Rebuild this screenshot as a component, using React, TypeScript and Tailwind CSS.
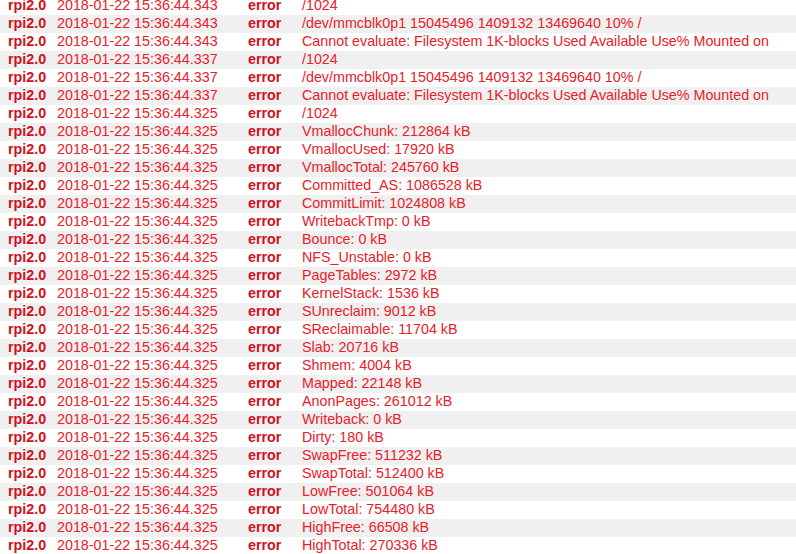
const rows: [string, string, string][] = [
["343","/1024"],["343","/dev/mmcblk0p1 15045496 1409132 13469640 10% /"],["343","Cannot evaluate: Filesystem 1K-blocks Used Available Use% Mounted on"],
["337","/1024"],["337","/dev/mmcblk0p1 15045496 1409132 13469640 10% /"],["337","Cannot evaluate: Filesystem 1K-blocks Used Available Use% Mounted on"],
["325","/1024"],["325","VmallocChunk: 212864 kB"],["325","VmallocUsed: 17920 kB"],["325","VmallocTotal: 245760 kB"],["325","Committed_AS: 1086528 kB"],["325","CommitLimit: 1024808 kB"],["325","WritebackTmp: 0 kB"],["325","Bounce: 0 kB"],["325","NFS_Unstable: 0 kB"],["325","PageTables: 2972 kB"],["325","KernelStack: 1536 kB"],["325","SUnreclaim: 9012 kB"],["325","SReclaimable: 11704 kB"],["325","Slab: 20716 kB"],["325","Shmem: 4004 kB"],["325","Mapped: 22148 kB"],["325","AnonPages: 261012 kB"],["325","Writeback: 0 kB"],["325","Dirty: 180 kB"],["325","SwapFree: 511232 kB"],["325","SwapTotal: 512400 kB"],["325","LowFree: 501064 kB"],["325","LowTotal: 754480 kB"],["325","HighFree: 66508 kB"],["325","HighTotal: 270336 kB"],
].map(([ms, m]) => ["rpi2.0", "2018-01-22 15:36:44." + ms, m] as [string,string,string]);

export default function App() {
  return (
    <div className="w-[796px] h-[554px] overflow-hidden bg-white" style={{ fontFamily: '"Liberation Sans", Arial, sans-serif' }}>
      <div className="flex flex-col mt-[-3px]">
        {rows.map(([h, d, m], i) => (
          <div key={i} className={`flex h-[18px] items-center text-[14.3px] whitespace-nowrap text-[#e8202a] ${i % 2 ? "bg-[#f0f0f0]" : "bg-white"}`}>
            <span className="w-[57px] pl-[8px] font-bold text-[#d0101a]">{h}</span>
            <span className="w-[191px]">{d}</span>
            <span className="w-[54px] font-bold text-[#d0101a]">error</span>
            <span>{m}</span>
          </div>
        ))}
      </div>
    </div>
  );
}
